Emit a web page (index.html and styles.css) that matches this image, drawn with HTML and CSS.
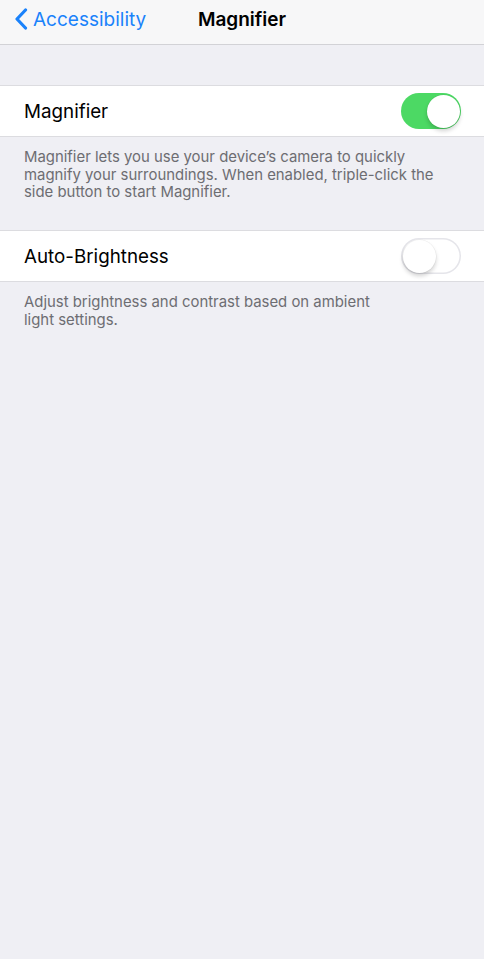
FILE: index.html
```html
<!DOCTYPE html>
<html>
<head>
<meta charset="utf-8">
<link rel="stylesheet" href="styles.css">
</head>
<body>
<div class="nav">
  <div class="back">
    <svg class="chev" width="14" height="22" viewBox="0 0 14 22"><path d="M11.5 2 L3 11 L11.5 20" fill="none" stroke="#1a82fb" stroke-width="3.2" stroke-linecap="round" stroke-linejoin="round"/></svg>
    <span>Accessibility</span>
  </div>
  <div class="title">Magnifier</div>
</div>
<div class="group first">
  <div class="row">
    <span class="label">Magnifier</span>
    <div class="switch on"><div class="knob"></div></div>
  </div>
</div>
<div class="footer">Magnifier lets you use your device’s camera to quickly magnify your surroundings. When enabled, triple-click the side button to start Magnifier.</div>
<div class="group">
  <div class="row">
    <span class="label">Auto-Brightness</span>
    <div class="switch off"><div class="knob"></div></div>
  </div>
</div>
<div class="footer short">Adjust brightness and contrast based on ambient light settings.</div>
</body>
</html>
```
FILE: styles.css
```css
* { box-sizing: border-box; }
html, body { margin: 0; padding: 0; }
body {
  background: #efeff4;
  font-family: Inter, "Liberation Sans", sans-serif;
  width: 484px;
  height: 959px;
  overflow: hidden;
}
.nav {
  height: 45px;
  padding-bottom: 6px;
  background: #f7f7f8;
  border-bottom: 1px solid #d2d2d6;
  position: relative;
  display: flex;
  align-items: center;
}
.back {
  display: flex;
  align-items: center;
  padding-left: 14px;
  color: #1a82fb;
  font-size: 19px;
  gap: 5px;
}
.title {
  position: absolute;
  left: 0; right: 0;
  top: 0;
  height: 39px;
  line-height: 39px;
  text-align: center;
  font-size: 19px;
  font-weight: 600;
  color: #000;
  pointer-events: none;
}
.group {
  background: #fff;
  border-top: 1px solid #dcdce0;
  border-bottom: 1px solid #dcdce0;
}
.group.first { margin-top: 40px; }
.row {
  height: 50px;
  display: flex;
  align-items: center;
  justify-content: space-between;
  padding: 0 23px 0 24px;
}
.label { font-size: 18.8px; color: #000; }
.footer {
  padding: 12px 40px 28px 24px;
  font-size: 14.9px;
  line-height: 17.7px;
  color: #6d6d72;
}
.footer.short { padding-right: 110px; }
.switch {
  width: 60px;
  height: 36px;
  border-radius: 18px;
  position: relative;
}
.switch.on { background: #4cd964; }
.switch.off { background: #fff; box-shadow: inset 0 0 0 1.5px #e5e5ea; }
.knob {
  position: absolute;
  top: 1.5px;
  width: 33px;
  height: 33px;
  border-radius: 50%;
  background: #fff;
  box-shadow: 0 3px 4px rgba(0,0,0,0.18), 0 0 0 0.5px rgba(0,0,0,0.06);
}
.on .knob { right: 1.5px; }
.off .knob { left: 1.5px; }
```
